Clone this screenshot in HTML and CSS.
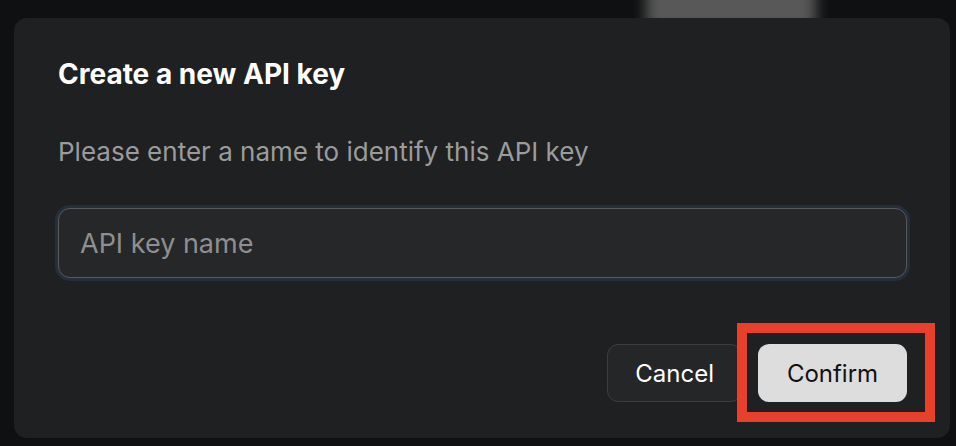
FILE: index.html
```html
<!DOCTYPE html>
<html lang="en">
<head>
<meta charset="utf-8">
<title>Create a new API key</title>
<link rel="stylesheet" href="styles.css">
</head>
<body>
<div class="backdrop">
  <div class="ghost"></div>
  <div class="modal">
    <h2 class="title">Create a new API key</h2>
    <p class="desc">Please enter a name to identify this API key</p>
    <input class="field" type="text" placeholder="API key name">
    <div class="actions">
      <button class="btn btn-cancel" type="button">Cancel</button>
      <div class="highlight-wrap">
        <button class="btn btn-confirm" type="button">Confirm</button>
        <span class="highlight"></span>
      </div>
    </div>
  </div>
</div>
</body>
</html>
```

FILE: styles.css
```css
* { box-sizing: border-box; }
html, body {
  margin: 0;
  padding: 0;
  background: #0f1012;
  font-family: Inter, "Noto Sans", sans-serif;
  overflow: hidden;
}
.backdrop {
  position: relative;
  width: 956px;
  height: 446px;
  padding: 18px 6px 8px 14px;
}
.ghost {
  position: absolute;
  left: 646px;
  top: -40px;
  width: 170px;
  height: 70px;
  background: #585858;
  filter: blur(7px);
  z-index: 0;
}
.modal {
  position: relative;
  z-index: 1;
  height: 420px;
  background: #1f2022;
  border-radius: 13px;
  padding: 40px 43px 36px 44px;
  display: flex;
  flex-direction: column;
}
.title {
  margin: 0;
  font-size: 28px;
  line-height: 32px;
  font-weight: 700;
  color: #ffffff;
}
.desc {
  margin: 46px 0 0;
  font-size: 26px;
  line-height: 32px;
  font-weight: 400;
  color: #9b9b9c;
}
.field {
  margin-top: 40px;
  height: 70px;
  width: 100%;
  background: #262729;
  border: 1px solid #57595d;
  border-radius: 12px;
  box-shadow: 0 0 0 3px #252f3c;
  padding: 0 21px;
  font-family: inherit;
  font-size: 27px;
  color: #ffffff;
  outline: none;
}
.field::placeholder { color: #8f8f90; }
.actions {
  margin-top: auto;
  display: flex;
  justify-content: flex-end;
  gap: 16px;
}
.btn {
  height: 58px;
  padding: 0 27px;
  border-radius: 11px;
  font-family: inherit;
  font-size: 24px;
  font-weight: 400;
  cursor: pointer;
}
.btn-cancel {
  background: #252628;
  border: 1px solid #3c3d40;
  color: #ffffff;
}
.btn-confirm {
  background: #dddddd;
  border: none;
  color: #111111;
  width: 149px;
  padding: 0;
}
.highlight-wrap {
  position: relative;
  display: flex;
}
.highlight {
  position: absolute;
  left: -21px;
  top: -21px;
  right: -28px;
  bottom: -20px;
  border: 10px solid #e8402a;
  pointer-events: none;
}
```
